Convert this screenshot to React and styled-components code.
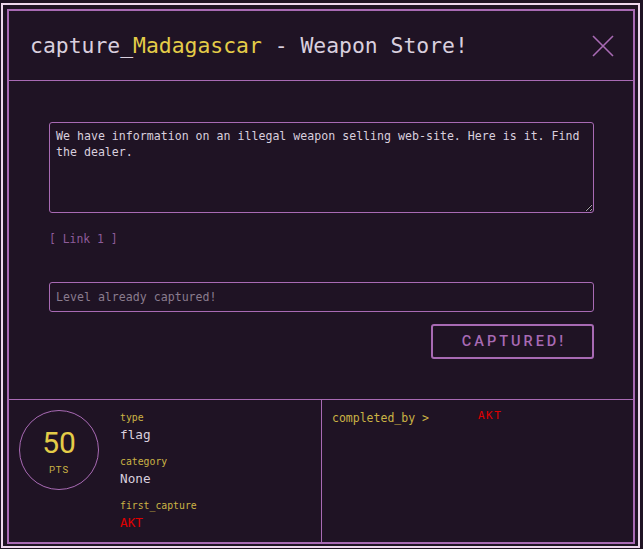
import styled, { createGlobalStyle } from 'styled-components';

const colors = {
  bg: '#1f1324',
  purple: '#a86ab4',
  light: '#eed8ee',
  text: '#d9cfde',
  yellow: '#e4cc48',
  label: '#cbb444',
  red: '#e00000',
  dim: '#8a7c8e',
  link: '#8e5c9a'
};

const mono = '"DejaVu Sans Mono", "Liberation Mono", monospace';

const GlobalStyle = createGlobalStyle`
  html, body {
    margin: 0;
    padding: 0;
    background: ${colors.bg};
  }
  body {
    font-family: ${mono};
    color: ${colors.text};
  }
  * {
    box-sizing: border-box;
  }
`;

const Frame = styled.div`
  margin: 3px 0 0 1px;
  width: 639px;
  height: 545px;
  border: 2px solid ${colors.light};
  padding: 4px 3px 2px 4px;
  background: ${colors.bg};
`;

const Modal = styled.div`
  height: 535px;
  border: 2px solid ${colors.purple};
  display: flex;
  flex-direction: column;
`;

const Header = styled.div`
  height: 70px;
  flex: none;
  display: flex;
  align-items: center;
  justify-content: space-between;
  padding: 0 19px 0 21px;
  border-bottom: 1px solid ${colors.purple};
`;

const Title = styled.h1`
  margin: 0;
  font-family: ${mono};
  font-weight: 400;
  font-size: 21.4px;
  line-height: 26px;
  color: ${colors.text};
`;

const Accent = styled.span`
  color: ${colors.yellow};
`;

const Close = styled.button`
  width: 22px;
  height: 22px;
  padding: 0;
  border: 0;
  background: none;
  cursor: pointer;
  display: flex;
`;

const Body = styled.div`
  flex: none;
  height: 319px;
  padding: 41px 39px 0 40px;
  border-bottom: 1px solid ${colors.purple};
  display: flex;
  flex-direction: column;
`;

const Description = styled.textarea`
  display: block;
  width: 100%;
  height: 91px;
  margin: 0;
  padding: 5px 6px;
  border: 1px solid ${colors.purple};
  border-radius: 3px;
  background: transparent;
  color: ${colors.text};
  color-scheme: dark;
  font-family: ${mono};
  font-size: 11.6px;
  line-height: 16px;
  outline: none;
  resize: vertical;
`;

const LinkText = styled.a`
  margin-top: 18px;
  font-size: 11.4px;
  line-height: 16px;
  color: ${colors.link};
  text-decoration: none;
`;

const FlagInput = styled.input`
  display: block;
  width: 100%;
  height: 30px;
  margin-top: 35px;
  padding: 0 6px;
  border: 1px solid ${colors.purple};
  border-radius: 3px;
  background: transparent;
  color: ${colors.text};
  font-family: ${mono};
  font-size: 11.6px;
  outline: none;

  &::placeholder {
    color: ${colors.dim};
  }
`;

const SubmitRow = styled.div`
  display: flex;
  justify-content: flex-end;
  margin-top: 12px;
`;

const SubmitButton = styled.button`
  width: 163px;
  height: 35px;
  border: 2px solid ${colors.purple};
  border-radius: 3px;
  background: transparent;
  color: ${colors.purple};
  font-family: Roboto, "Liberation Sans", sans-serif;
  font-weight: 500;
  font-size: 14.5px;
  letter-spacing: 3px;
  padding: 0 0 0 3px;
  cursor: default;
`;

const Footer = styled.div`
  flex: 1;
  display: grid;
  grid-template-columns: 313px 1fr;
`;

const InfoPane = styled.div`
  display: flex;
  gap: 21px;
  padding: 10px 10px;
  border-right: 1px solid ${colors.purple};
`;

const Score = styled.div`
  width: 80px;
  height: 80px;
  flex: none;
  border: 1px solid ${colors.purple};
  border-radius: 50%;
  display: flex;
  flex-direction: column;
  align-items: center;
  justify-content: center;
  color: ${colors.yellow};
  font-family: Roboto, "Liberation Sans", sans-serif;
`;

const Points = styled.div`
  font-size: 30px;
  line-height: 30px;
  margin-top: 2px;
`;

const Unit = styled.div`
  font-size: 9.5px;
  letter-spacing: 1px;
  margin-top: 6px;
  color: ${colors.label};
`;

const Fields = styled.dl`
  margin: 0;
  display: flex;
  flex-direction: column;
  gap: 10px;
`;

const Field = styled.div`
  display: flex;
  flex-direction: column;
`;

const Label = styled.dt`
  font-size: 9.8px;
  line-height: 16px;
  color: ${colors.label};
`;

const Value = styled.dd`
  margin: 0;
  font-size: 12.7px;
  line-height: 18px;
  color: ${({ $red }) => ($red ? colors.red : colors.text)};
`;

const SolvesPane = styled.div`
  display: flex;
  align-items: flex-start;
  padding: 10px 10px;
`;

const SolvesLabel = styled.span`
  font-size: 11.5px;
  line-height: 16px;
  color: ${colors.label};
`;

const Solver = styled.span`
  margin-left: 49px;
  font-size: 11px;
  line-height: 12px;
  letter-spacing: 1.5px;
  color: ${colors.red};
`;

const CloseIcon = () => (
  <svg width="22" height="22" viewBox="0 0 22 22">
    <path d="M1 1 L21 21 M21 1 L1 21" stroke={colors.purple} strokeWidth="1.6" fill="none" />
  </svg>
);

const fields = [
  { label: 'type', value: 'flag' },
  { label: 'category', value: 'None' },
  { label: 'first_capture', value: 'AKT', red: true }
];

const App = () => (
  <>
    <GlobalStyle />
    <Frame>
      <Modal>
        <Header>
          <Title>
            capture_<Accent>Madagascar</Accent> - Weapon Store!
          </Title>
          <Close aria-label="Close">
            <CloseIcon />
          </Close>
        </Header>
        <Body>
          <Description
            readOnly
            value="We have information on an illegal weapon selling web-site. Here is it. Find the dealer."
          />
          <LinkText href="#">[ Link 1 ]</LinkText>
          <FlagInput placeholder="Level already captured!" disabled />
          <SubmitRow>
            <SubmitButton>CAPTURED!</SubmitButton>
          </SubmitRow>
        </Body>
        <Footer>
          <InfoPane>
            <Score>
              <Points>50</Points>
              <Unit>PTS</Unit>
            </Score>
            <Fields>
              {fields.map((f) => (
                <Field key={f.label}>
                  <Label>{f.label}</Label>
                  <Value $red={f.red}>{f.value}</Value>
                </Field>
              ))}
            </Fields>
          </InfoPane>
          <SolvesPane>
            <SolvesLabel>completed_by &gt;</SolvesLabel>
            <Solver>AKT</Solver>
          </SolvesPane>
        </Footer>
      </Modal>
    </Frame>
  </>
);

export default App;
